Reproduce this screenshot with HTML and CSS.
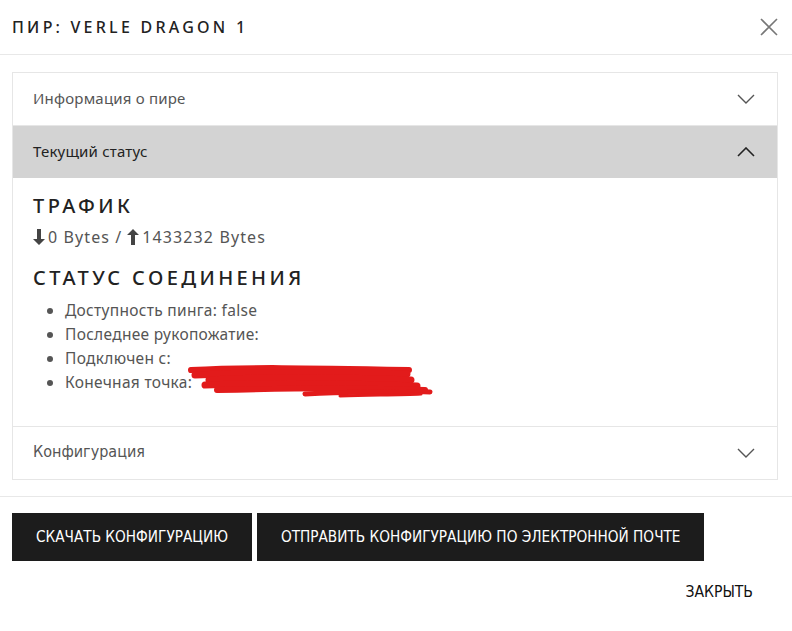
FILE: index.html
```html
<!DOCTYPE html>
<html lang="ru">
<head>
  <meta charset="UTF-8">
  <title>Пир</title>
  <link rel="stylesheet" href="styles.css">
</head>
<body>
  <div class="dialog">
    <header class="dialog-head">
      <h1>Пир: Verle Dragon 1</h1>
      <button class="close-x" aria-label="close">
        <svg width="18" height="18" viewBox="0 0 18 18"><path d="M1 1L17 17M17 1L1 17" stroke="#777" stroke-width="1.6" fill="none"/></svg>
      </button>
    </header>

    <div class="dialog-body">
      <div class="accordion">
        <div class="acc-item">
          <div class="acc-head">
            <span>Информация о пире</span>
            <svg class="chev" width="18" height="10" viewBox="0 0 18 10"><path d="M1 1L9 9L17 1" stroke="#555" stroke-width="1.4" fill="none"/></svg>
          </div>
        </div>

        <div class="acc-item open">
          <div class="acc-head">
            <span>Текущий статус</span>
            <svg class="chev" width="18" height="10" viewBox="0 0 18 10"><path d="M1 9L9 1L17 9" stroke="#222" stroke-width="1.6" fill="none"/></svg>
          </div>
          <div class="acc-content">
            <h2>Трафик</h2>
            <p class="traffic">
              <svg width="12" height="16" viewBox="0 0 12 16"><path d="M4 0H8V10H12L6 16L0 10H4Z" fill="#444"/></svg>0 Bytes /
              <svg width="12" height="16" viewBox="0 0 12 16"><path d="M4 16H8V6H12L6 0L0 6H4Z" fill="#444"/></svg>1433232 Bytes
            </p>
            <h2>Статус соединения</h2>
            <ul class="status">
              <li>Доступность пинга: false</li>
              <li>Последнее рукопожатие:</li>
              <li>Подключен с:</li>
              <li>Конечная точка:</li>
            </ul>
            <svg class="scribble" width="250" height="36" viewBox="0 0 250 36">
              <g stroke="#e21b1b" stroke-linecap="round" fill="none">
                <path d="M6 5C60 2 120 3 224 5" stroke-width="6"/>
                <path d="M10 10C70 7 150 7 222 9" stroke-width="7"/>
                <path d="M24 15C90 11 170 13 226 15" stroke-width="7"/>
                <path d="M20 20C100 17 180 19 232 21" stroke-width="7"/>
                <path d="M32 25C110 23 190 23 240 25" stroke-width="6"/>
                <path d="M120 29C170 27 215 26 245 27" stroke-width="5"/>
                <path d="M155 31C190 30 215 30 236 29" stroke-width="3"/>
              </g>
            </svg>
          </div>
        </div>

        <div class="acc-item">
          <div class="acc-head narrow">
            <span>Конфигурация</span>
            <svg class="chev" width="18" height="10" viewBox="0 0 18 10"><path d="M1 1L9 9L17 1" stroke="#555" stroke-width="1.4" fill="none"/></svg>
          </div>
        </div>
      </div>
    </div>

    <div class="dialog-actions">
      <div class="action-row">
        <button class="btn-dark">Скачать конфигурацию</button>
        <button class="btn-dark">Отправить конфигурацию по электронной почте</button>
      </div>
      <div class="close-row">
        <button class="btn-text">Закрыть</button>
      </div>
    </div>
  </div>
</body>
</html>
```

FILE: styles.css
```css
body {
  margin: 0;
  padding: 0;
  background-color: #fff;
  font-family: "Noto Sans", "Open Sans", sans-serif;
  color: #222;
}

.dialog {
  width: 792px;
}

.dialog-head {
  display: flex;
  align-items: center;
  justify-content: space-between;
  height: 55px;
  padding: 0 12px;
  border-bottom: 1px solid #e8e8e8;
  box-sizing: border-box;
}

.dialog-head h1 {
  margin: 0 0 1px;
  font-size: 16px;
  font-weight: 500;
  letter-spacing: 3.25px;
  text-transform: uppercase;
  color: #222;
}

.close-x {
  background: none;
  border: none;
  padding: 0;
  margin-right: 2px;
  display: flex;
  cursor: pointer;
}

.dialog-body {
  padding: 17px 14px 16px 12px;
  border-bottom: 1px solid #e8e8e8;
}

.accordion {
  border: 1px solid #e6e6e6;
}

.acc-item + .acc-item {
  border-top: 1px solid #e6e6e6;
}

.acc-head {
  display: flex;
  align-items: center;
  justify-content: space-between;
  height: 52px;
  padding: 0 22px 0 20px;
  font-size: 15px;
  color: #555;
  letter-spacing: 0.2px;
}

.acc-head span {
  margin-bottom: 3px;
}

.acc-head.narrow {
  font-family: "Liberation Sans Narrow", "DejaVu Sans Condensed", sans-serif;
  font-size: 16px;
  letter-spacing: 0;
}

.open .acc-head {
  background-color: #d3d3d3;
  color: #222;
}

.acc-content {
  position: relative;
  padding: 14px 20px 32px;
}

.acc-content h2 {
  margin: 0;
  font-size: 20px;
  font-weight: 500;
  letter-spacing: 3.4px;
  text-transform: uppercase;
  color: #222;
  line-height: 28px;
}

.traffic {
  display: flex;
  align-items: center;
  gap: 3px;
  margin: 6px 0 16px;
  font-size: 16px;
  color: #555;
  letter-spacing: 1.1px;
}

.traffic svg + svg {
  margin-left: 2px;
}

.status {
  margin: 6px 0 0;
  padding-left: 32px;
  font-size: 15.5px;
  line-height: 24px;
  color: #555;
  letter-spacing: 0.3px;
}

.scribble {
  position: absolute;
  left: 172px;
  top: 187px;
}

.dialog-actions {
  padding: 16px 12px;
}

.action-row {
  display: flex;
  gap: 5px;
}

.btn-dark {
  height: 48px;
  padding: 0 24px;
  background-color: #1c1c1c;
  color: #fff;
  border: none;
  font-family: "Liberation Sans Narrow", "DejaVu Sans Condensed", sans-serif;
  font-size: 15.2px;
  text-transform: uppercase;
  cursor: pointer;
}

.close-row {
  display: flex;
  justify-content: flex-end;
  margin-top: 14px;
  padding-right: 15px;
}

.btn-text {
  background: none;
  border: none;
  padding: 8px 12px;
  font-family: "Liberation Sans Narrow", "DejaVu Sans Condensed", sans-serif;
  font-size: 15.6px;
  text-transform: uppercase;
  color: #111;
  cursor: pointer;
}
```
